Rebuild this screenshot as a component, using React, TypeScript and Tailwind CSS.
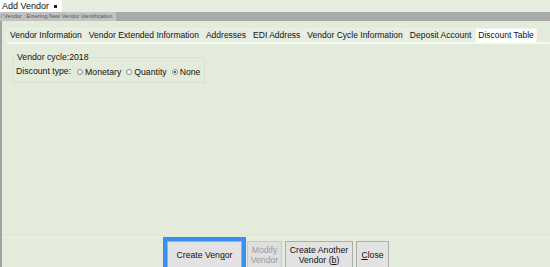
import React from "react";

const TABS = [
  "Vendor Information",
  "Vendor Extended Information",
  "Addresses",
  "EDI Address",
  "Vendor Cycle Information",
  "Deposit Account",
  "Discount Table",
];

function Radio({ checked, label }: { checked?: boolean; label: string }) {
  return (
    <label className="flex items-center gap-[2px]">
      <span className="flex h-[6px] w-[6px] items-center justify-center rounded-full border border-[#8a8a8a] bg-white">
        {checked && <span className="h-[2px] w-[2px] rounded-full bg-[#222]" />}
      </span>
      <span>{label}</span>
    </label>
  );
}

export default function App() {
  return (
    <div
      className="flex h-[267px] w-[550px] flex-col overflow-hidden bg-[#e3ebdb] text-[#111]"
      style={{ fontFamily: '"Liberation Sans", Arial, sans-serif' }}
    >
      {/* window title */}
      <div className="flex h-[12px] shrink-0 items-center bg-[#e6ede0]">
        <div className="flex h-full w-[62px] items-center bg-white pl-[2px] text-[9px] leading-none">
          <span>Add Vendor</span>
          <span className="ml-[5px] h-[3px] w-[3px] bg-[#222]" />
        </div>
      </div>

      {/* breadcrumb */}
      <div className="flex h-[9px] shrink-0 items-center bg-[#a9a9a9]">
        <div className="flex h-full w-[116px] items-center whitespace-nowrap bg-[#c2c2c2] pl-[1px] text-[5.6px] leading-none text-[#555]">
          / Vendor : Entering New Vendor Identification
        </div>
      </div>

      <div className="flex min-h-0 flex-1 flex-col border-l-[2px] border-[#a3a3a3]">
        {/* tabs */}
        <div className="mt-[7px] flex h-[14px] shrink-0 gap-[1px] pl-[5px] text-[8.5px] leading-none">
          {TABS.map((t) => (
            <div
              key={t}
              className={`flex shrink-0 items-center whitespace-nowrap border border-b-0 px-[2px] ${
                t === "Discount Table"
                  ? "border-[#f3f3f3] bg-white"
                  : "border-[#eef1ea] bg-[#e6ecdf]"
              }`}
            >
              {t}
            </div>
          ))}
        </div>
        <div className="ml-[5px] h-[2px] shrink-0 bg-[#f6f8f3]" />

        {/* panel */}
        <div className="min-h-0 flex-1 border-b border-[#eef1ea] pl-[10px] pt-[8px] text-[8.7px] leading-none">
          <fieldset className="w-[193px] border border-[#d8e0d1] px-[3px] pb-[5px]">
            <legend className="px-[1px] leading-[11px]">Vendor cycle:2018</legend>
            <div className="mt-[5px] flex items-center gap-[5px] whitespace-nowrap">
              <span className="mr-[1px] -translate-y-[1px]">Discount type:</span>
              <Radio label="Monetary" />
              <Radio label="Quantity" />
              <Radio checked label="None" />
            </div>
          </fieldset>
        </div>

        {/* buttons */}
        <div className="-mt-[1px] flex h-[30px] shrink-0 items-start pl-[161px] text-[8.7px] leading-[10px]">
          <div className="shrink-0 border-[4px] border-[#3a8ef0]">
            <button className="h-[28px] w-[75px] border border-[#adadad] bg-[#e2e2e2]">
              Create Ven<span className="underline">g</span>or
            </button>
          </div>
          <button
            disabled
            className="ml-[1px] mt-[4px] h-[28px] w-[35px] shrink-0 border border-[#c8c8c8] bg-[#dfdfdf] text-[#9b9b9b]"
          >
            Modify
            <br />
            Vendor
          </button>
          <button className="ml-[3px] mt-[4px] h-[28px] w-[68px] shrink-0 border border-[#adadad] bg-[#e2e2e2]">
            Create Another
            <br />
            Vendor (<span className="underline">b</span>)
          </button>
          <button className="ml-[3px] mt-[4px] h-[28px] w-[33px] shrink-0 border border-[#adadad] bg-[#e2e2e2]">
            <span className="underline">C</span>lose
          </button>
        </div>
      </div>
    </div>
  );
}
